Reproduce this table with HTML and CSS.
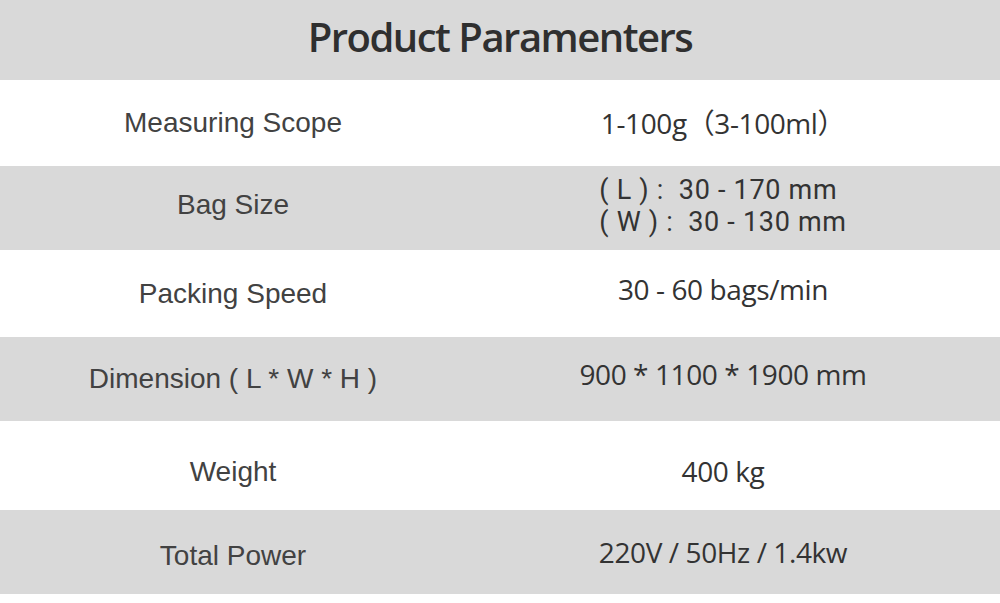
FILE: index.html
```html
<!DOCTYPE html>
<html lang="en">
<head>
<meta charset="utf-8">
<title>Product Paramenters</title>
<link rel="stylesheet" href="styles.css">
</head>
<body>
<div class="sheet">
  <header class="title-bar"><h1 class="title">Product Paramenters</h1></header>
  <div class="row white h86">
    <div class="label">Measuring Scope</div>
    <div class="value">1-100g（3-100ml）</div>
  </div>
  <div class="row gray h84">
    <div class="label up7">Bag Size</div>
    <div class="value up5"><div class="stack"><div class="line">( L ) :&nbsp; 30 - 170 mm</div><div class="line">( W ) :&nbsp; 30 - 130 mm</div></div></div>
  </div>
  <div class="row white h87">
    <div class="label">Packing Speed</div>
    <div class="value up9">30 - 60 bags/min</div>
  </div>
  <div class="row gray h84">
    <div class="label">Dimension ( L * W * H )</div>
    <div class="value up10">900 * 1100 * 1900 mm</div>
  </div>
  <div class="row white h89">
    <div class="label down13">Weight</div>
    <div class="value down11">400 kg</div>
  </div>
  <div class="row gray h84">
    <div class="label down8">Total Power</div>
    <div class="value">220V / 50Hz / 1.4kw</div>
  </div>
</div>
</body>
</html>
```
FILE: styles.css
```css
html, body {
  margin: 0;
  padding: 0;
  background: #ffffff;
}
.sheet {
  width: 1000px;
  display: flex;
  flex-direction: column;
}
.title-bar {
  height: 80px;
  background: #d9d9d9;
  display: flex;
  align-items: center;
  justify-content: center;
}
.title {
  margin: 0;
  padding-bottom: 6px;
  font-family: "Open Sans", sans-serif;
  font-weight: 600;
  font-size: 40px;
  letter-spacing: -1.5px;
  line-height: 44px;
  color: #2f2f2f;
}
.row {
  display: grid;
  grid-template-columns: 466px 514px;
}
.white { background: #ffffff; }
.gray { background: #d9d9d9; }
.h84 { height: 84px; }
.h86 { height: 86px; }
.h87 { height: 87px; }
.h89 { height: 89px; }
.label, .value {
  display: flex;
  align-items: center;
  justify-content: center;
  box-sizing: border-box;
  line-height: 32px;
  white-space: nowrap;
}
.label {
  font-family: "Liberation Sans", Arial, sans-serif;
  font-size: 28px;
  color: #424242;
}
.value {
  font-family: "Open Sans", "Noto Sans CJK SC", sans-serif;
  font-size: 28px;
  letter-spacing: -0.4px;
  color: #333333;
}
.stack {
  text-align: left;
  font-family: Roboto, "Open Sans", sans-serif;
  font-size: 27px;
  letter-spacing: 0.7px;
}
.line {
  height: 32px;
  line-height: 32px;
}
.up5 { padding-bottom: 5px; }
.up7 { padding-bottom: 7px; }
.up9 { padding-bottom: 9px; }
.up10 { padding-bottom: 10px; }
.down8 { padding-top: 8px; }
.down11 { padding-top: 11px; }
.down13 { padding-top: 13px; }
```
